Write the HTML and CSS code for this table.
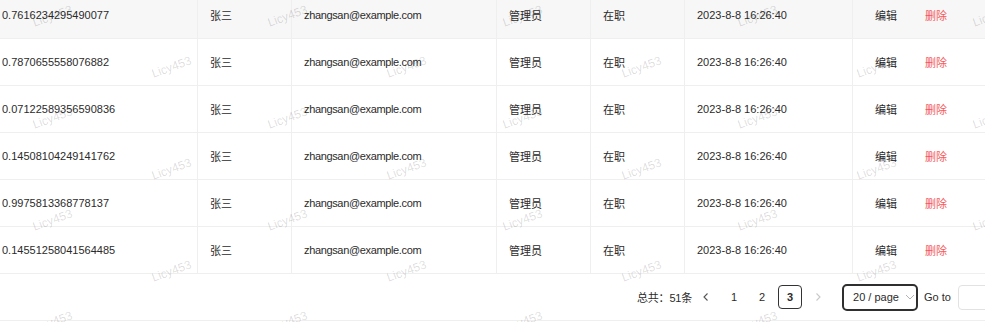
FILE: index.html
```html
<!DOCTYPE html>
<html lang="zh-CN">
<head>
<meta charset="utf-8">
<title>Table</title>
<link rel="stylesheet" href="styles.css">
</head>
<body>
<div class="page">
  <div class="scroller">
    <div class="table">
      <div class="row hover">
        <div class="cell c1">0.7616234295490077</div>
        <div class="cell c2">张三</div>
        <div class="cell c3 email">zhangsan@example.com</div>
        <div class="cell c4">管理员</div>
        <div class="cell c5">在职</div>
        <div class="cell c6">2023-8-8 16:26:40</div>
        <div class="cell c7"><span class="btn">编辑</span><span class="btn danger">删除</span></div>
      </div>
      <div class="row">
        <div class="cell c1">0.7870655558076882</div>
        <div class="cell c2">张三</div>
        <div class="cell c3 email">zhangsan@example.com</div>
        <div class="cell c4">管理员</div>
        <div class="cell c5">在职</div>
        <div class="cell c6">2023-8-8 16:26:40</div>
        <div class="cell c7"><span class="btn">编辑</span><span class="btn danger">删除</span></div>
      </div>
      <div class="row">
        <div class="cell c1">0.07122589356590836</div>
        <div class="cell c2">张三</div>
        <div class="cell c3 email">zhangsan@example.com</div>
        <div class="cell c4">管理员</div>
        <div class="cell c5">在职</div>
        <div class="cell c6">2023-8-8 16:26:40</div>
        <div class="cell c7"><span class="btn">编辑</span><span class="btn danger">删除</span></div>
      </div>
      <div class="row">
        <div class="cell c1">0.14508104249141762</div>
        <div class="cell c2">张三</div>
        <div class="cell c3 email">zhangsan@example.com</div>
        <div class="cell c4">管理员</div>
        <div class="cell c5">在职</div>
        <div class="cell c6">2023-8-8 16:26:40</div>
        <div class="cell c7"><span class="btn">编辑</span><span class="btn danger">删除</span></div>
      </div>
      <div class="row">
        <div class="cell c1">0.9975813368778137</div>
        <div class="cell c2">张三</div>
        <div class="cell c3 email">zhangsan@example.com</div>
        <div class="cell c4">管理员</div>
        <div class="cell c5">在职</div>
        <div class="cell c6">2023-8-8 16:26:40</div>
        <div class="cell c7"><span class="btn">编辑</span><span class="btn danger">删除</span></div>
      </div>
      <div class="row">
        <div class="cell c1">0.14551258041564485</div>
        <div class="cell c2">张三</div>
        <div class="cell c3 email">zhangsan@example.com</div>
        <div class="cell c4">管理员</div>
        <div class="cell c5">在职</div>
        <div class="cell c6">2023-8-8 16:26:40</div>
        <div class="cell c7"><span class="btn">编辑</span><span class="btn danger">删除</span></div>
      </div>
    </div>
    <div class="pager">
      <span class="total">总共：51条</span>
      <span class="pbtn arrow"><svg width="8" height="10" viewBox="0 0 8 10"><polyline points="5.5,1.5 2,5 5.5,8.5" fill="none" stroke="#555" stroke-width="1.1"/></svg></span>
      <span class="pbtn">1</span>
      <span class="pbtn">2</span>
      <span class="pbtn active">3</span>
      <span class="pbtn arrow"><svg width="8" height="10" viewBox="0 0 8 10"><polyline points="2.5,1.5 6,5 2.5,8.5" fill="none" stroke="#c8c8c8" stroke-width="1.1"/></svg></span>
      <span class="select">20 / page<svg class="chev" width="10" height="6" viewBox="0 0 10 6"><polyline points="1,1 5,5 9,1" fill="none" stroke="#b4b4b4" stroke-width="1"/></svg></span>
      <span class="goto">Go to</span>
      <span class="input"></span>
    </div>
  </div>
  <div class="watermark">
    <div class="wm-row a"><span>Licy453</span><span>Licy453</span><span>Licy453</span><span>Licy453</span><span>Licy453</span></div>
    <div class="wm-row b"><span>Licy453</span><span>Licy453</span><span>Licy453</span><span>Licy453</span></div>
    <div class="wm-row a"><span>Licy453</span><span>Licy453</span><span>Licy453</span><span>Licy453</span><span>Licy453</span></div>
    <div class="wm-row b"><span>Licy453</span><span>Licy453</span><span>Licy453</span><span>Licy453</span></div>
    <div class="wm-row a"><span>Licy453</span><span>Licy453</span><span>Licy453</span><span>Licy453</span><span>Licy453</span></div>
    <div class="wm-row b"><span>Licy453</span><span>Licy453</span><span>Licy453</span><span>Licy453</span></div>
    <div class="wm-row a"><span>Licy453</span><span>Licy453</span><span>Licy453</span><span>Licy453</span><span>Licy453</span></div>
  </div>
</div>
</body>
</html>
```

FILE: styles.css
```css
* { box-sizing: border-box; }

html, body {
  margin: 0;
  padding: 0;
  background: #ffffff;
  overflow: hidden;
}

body {
  font-family: "Liberation Sans", Arial, "Noto Sans CJK SC", sans-serif;
  font-size: 11px;
  color: #2b2b2b;
}

.page {
  position: relative;
  width: 985px;
  height: 322px;
  overflow: hidden;
}

.scroller {
  margin-top: -8px;
  margin-left: -10px;
  width: 1240px;
}

.row {
  display: flex;
  height: 47px;
  border-bottom: 1px solid #efefef;
  background: #ffffff;
}

.row.hover {
  background: #f7f7f7;
}

.cell {
  display: flex;
  align-items: center;
  padding-left: 12px;
  border-right: 1px solid #efefef;
  white-space: nowrap;
  flex: none;
}

.c1 { width: 208px; }
.c2 { width: 94px; }
.c3 { width: 205px; }
.c4 { width: 94px; }
.c5 { width: 94px; }
.c6 { width: 168px; }
.c7 { width: 250px; padding-left: 22px; gap: 28px; }

.email { letter-spacing: -0.35px; }

.btn { color: #2b2b2b; }
.btn.danger { color: #f5575a; }

.pager {
  display: flex;
  align-items: center;
  height: 47px;
  padding-left: 647px;
  border-bottom: 1px solid #efefef;
}

.total {
  margin-right: 2px;
  letter-spacing: -0.2px;
}

.pbtn {
  width: 24px;
  height: 24px;
  margin-right: 4px;
  display: flex;
  align-items: center;
  justify-content: center;
  border-radius: 4px;
}

.pbtn.active {
  border: 1.5px solid #333333;
  font-weight: bold;
}

.pbtn.arrow svg { display: block; }

.select {
  margin-left: 8px;
  width: 76px;
  height: 27px;
  border: 2px solid #2f2f2f;
  border-radius: 5px;
  display: flex;
  align-items: center;
  padding-left: 9px;
  gap: 6px;
}

.chev { display: block; }

.goto {
  margin-left: 6px;
}

.input {
  margin-left: 7px;
  width: 50px;
  height: 25px;
  border: 1px solid #e2e2e2;
  border-radius: 4px;
}

.watermark {
  position: absolute;
  inset: 0;
  pointer-events: none;
  overflow: hidden;
}

.wm-row {
  display: flex;
  height: 51px;
  align-items: center;
}

.wm-row:first-child { margin-top: -10px; }

.wm-row.a { margin-left: -65px; }
.wm-row.b { margin-left: 54px; }

.wm-row span {
  flex: none;
  width: 235px;
  text-align: center;
  font-size: 12px;
  color: rgba(0, 0, 0, 0.14);
  transform: rotate(-20deg);
}
```
